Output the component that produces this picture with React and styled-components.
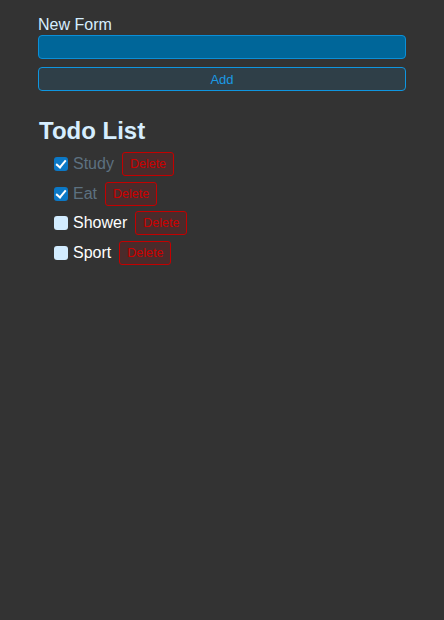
import React, { useState } from "react";
import styled, { createGlobalStyle } from "styled-components";

const Global = createGlobalStyle`
  html, body { background: #333333; }
  body { margin: 8px; font-family: "Liberation Sans", Arial, sans-serif; }
`;

const Page = styled.div`
  padding: 8px 30px;
  display: flex;
  flex-direction: column;
`;

const Form = styled.form`
  display: flex;
  flex-direction: column;
  gap: 8px;
`;

const FieldLabel = styled.label`
  color: #d6eeff;
  font-size: 16px;
  line-height: 18px;
  margin-bottom: -7px;
`;

const TextInput = styled.input`
  box-sizing: border-box;
  height: 24px;
  width: 100%;
  background: #006699;
  border: 1px solid #0a8fd8;
  border-radius: 4px;
  color: #fff;
  outline: none;
  padding: 0 6px;
`;

const AddButton = styled.button`
  box-sizing: border-box;
  height: 24px;
  width: 100%;
  background: #2f3f48;
  border: 1px solid #0f96e0;
  border-radius: 4px;
  color: #1a9ae4;
  font-family: "Liberation Sans", Arial, sans-serif;
  font-size: 13px;
`;

const Title = styled.h2`
  color: #d6eeff;
  font-size: 24px;
  line-height: 27px;
  font-weight: bold;
  margin: 26px 0 8px 1px;
`;

const List = styled.ul`
  list-style: none;
  margin: 0;
  padding: 0 0 0 16px;
  display: flex;
  flex-direction: column;
  gap: 5.5px;
`;

const Row = styled.li`
  display: flex;
  align-items: center;
  height: 24px;
`;

const Check = styled.input`
  appearance: none;
  margin: 0 5px 0 0;
  width: 14px;
  height: 14px;
  border-radius: 3px;
  background: #d2ecff;
  position: relative;
  flex: none;
  &:checked {
    background: #0b78c6;
  }
  &:checked::after {
    content: "";
    position: absolute;
    left: 4px;
    top: 1px;
    width: 4px;
    height: 8px;
    border: solid #fff;
    border-width: 0 2.5px 2.5px 0;
    transform: rotate(40deg);
  }
`;

const ItemText = styled.span`
  font-size: 16px;
  color: ${(p) => (p.$done ? "#5d7180" : "#ffffff")};
  margin-right: 8px;
`;

const DeleteButton = styled.button`
  box-sizing: border-box;
  height: 24px;
  padding: 0 7px;
  background: #4a2b2b;
  border: 1px solid #c40000;
  border-radius: 3px;
  color: #cc0000;
  font-family: "Liberation Sans", Arial, sans-serif;
  font-size: 12.5px;
`;

export default function App() {
  const [todos, setTodos] = useState([
    { id: 1, text: "Study", done: true },
    { id: 2, text: "Eat", done: true },
    { id: 3, text: "Shower", done: false },
    { id: 4, text: "Sport", done: false },
  ]);
  const [value, setValue] = useState("");
  const toggle = (id) =>
    setTodos((t) => t.map((x) => (x.id === id ? { ...x, done: !x.done } : x)));
  const remove = (id) => setTodos((t) => t.filter((x) => x.id !== id));
  const add = (e) => {
    e.preventDefault();
    if (!value.trim()) return;
    setTodos((t) => [...t, { id: Date.now(), text: value, done: false }]);
    setValue("");
  };
  return (
    <>
      <Global />
      <Page>
        <Form onSubmit={add}>
          <FieldLabel htmlFor="nf">New Form</FieldLabel>
          <TextInput id="nf" value={value} onChange={(e) => setValue(e.target.value)} />
          <AddButton type="submit">Add</AddButton>
        </Form>
        <Title>Todo List</Title>
        <List>
          {todos.map((t) => (
            <Row key={t.id}>
              <Check type="checkbox" checked={t.done} onChange={() => toggle(t.id)} />
              <ItemText $done={t.done}>{t.text}</ItemText>
              <DeleteButton onClick={() => remove(t.id)}>Delete</DeleteButton>
            </Row>
          ))}
        </List>
      </Page>
    </>
  );
}
